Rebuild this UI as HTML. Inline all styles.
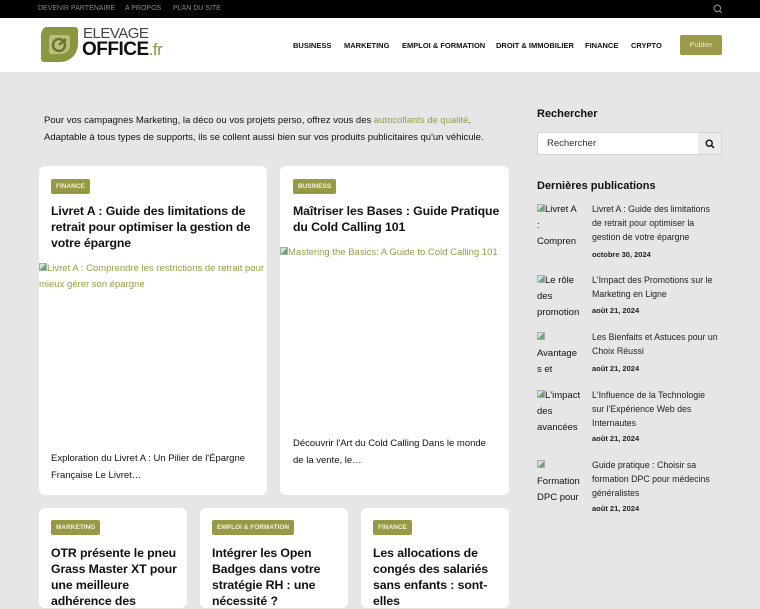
<!DOCTYPE html>
<html><head><meta charset="utf-8"><style>
*{margin:0;padding:0;box-sizing:border-box}
body{width:760px;height:600px;overflow:hidden;background:#e6e6e6;font-family:"Liberation Sans",Arial,sans-serif;color:#111;position:relative}
.top{position:absolute;left:0;top:0;width:760px;height:18px;background:#000}
.top span{position:absolute;top:5px;font-size:7px;color:#888}
.hdr{position:absolute;left:0;top:18px;width:760px;height:54px;background:#fff}
.nav{position:absolute;top:41px;font-size:7.5px;font-weight:bold;color:#111}
.btn{position:absolute;left:680px;top:35px;width:42px;height:20px;background:#9a9a48;border-radius:2px;color:#e8e8c8;font-size:7.5px;text-align:center;line-height:20px}
.intro{position:absolute;left:44px;top:112px;width:470px;font-size:9.5px;line-height:17px;color:#111}
.intro a{color:#9a9a48;text-decoration:none}
.card{position:absolute;background:#fff;border-radius:6px}
.tag{position:absolute;background:#979a45;color:#f0f0e0;font-size:6.5px;font-weight:bold;height:15px;line-height:15px;padding:0 5px;border-radius:2px}
.ttl{position:absolute;font-size:12.3px;font-weight:bold;line-height:16px;color:#111;letter-spacing:-0.1px}
.alt{position:absolute;font-size:9.5px;line-height:16px;color:#9a9a48}
.exc{position:absolute;font-size:9.5px;line-height:17px;color:#111}
.side h3{position:absolute;font-size:11px;font-weight:bold}
.sb{position:absolute;left:537px;top:132px;width:185px;height:23px;background:#fff;border:1px solid #d4d4d4}
.sb span{position:absolute;left:9px;top:5px;font-size:9.5px;color:#333}
.sb i{position:absolute;right:0;top:0;width:23px;height:21px;background:#ececec}
.it{position:absolute;left:537px;font-size:9.5px;line-height:16px;color:#111;width:44px;overflow-wrap:anywhere;height:48px;overflow:hidden}
.pt{position:absolute;left:592px;width:128px;font-size:8.8px;line-height:14px;color:#222}
.dt{position:absolute;left:592px;font-size:7.5px;font-weight:bold;color:#222}
.bi{display:inline-block;width:8px;height:8px;border:1px solid #aaa;background:linear-gradient(135deg,#cde 50%,#6a6 50%);vertical-align:0}
</style></head><body>
<div class="top">
<span style="left:38px">DEVENIR PARTENAIRE</span>
<span style="left:125px">A PROPOS</span>
<span style="left:173px">PLAN DU SITE</span>
<svg style="position:absolute;left:713px;top:4px" width="10" height="10" viewBox="0 0 10 10"><circle cx="4.3" cy="4.3" r="3.3" fill="none" stroke="#999" stroke-width="1"/><path d="M6.7 6.7L9 9" stroke="#999" stroke-width="1"/></svg>
</div>
<div class="hdr">
<svg style="position:absolute;left:39px;top:7px" width="40" height="38" viewBox="0 0 40 38"><path d="M8 2h28a3 3 0 0 1 3 3v14c0 10-8 18-18 18H5a3 3 0 0 1-3-3V12C2 6 4 2 8 2z" fill="#8c9640"/><path d="M12 10h17c1 0 2 1 2 2v8c0 5-4 9-9 9H12c-1 0-2-1-2-2V15c0-3 1-5 2-5z" fill="#b9c07a"/><circle cx="20" cy="20" r="6" fill="none" stroke="#6b7330" stroke-width="2.5"/><path d="M20 20l7-6" stroke="#6b7330" stroke-width="2.5"/></svg>
<div style="position:absolute;left:83px;top:7px;font-size:15px;color:#444;letter-spacing:-0.5px">ELEVAGE</div>
<div style="position:absolute;left:82px;top:21px;font-size:19px;font-weight:bold;color:#111;letter-spacing:-0.5px">OFFICE<span style="font-weight:normal;color:#8c9640;font-size:17px">.fr</span></div>
</div>
<div class="nav" style="left:293px">BUSINESS</div>
<div class="nav" style="left:344px">MARKETING</div>
<div class="nav" style="left:402px">EMPLOI &amp; FORMATION</div>
<div class="nav" style="left:496px">DROIT &amp; IMMOBILIER</div>
<div class="nav" style="left:585px">FINANCE</div>
<div class="nav" style="left:631px">CRYPTO</div>
<div class="btn">Publier</div>

<div class="intro">Pour vos campagnes Marketing, la déco ou vos projets perso, offrez vous des <a>autocollants de qualité</a>.<br>Adaptable à tous types de supports, ils se collent aussi bien sur vos produits publicitaires qu'un véhicule.</div>

<div class="card" style="left:39px;top:166px;width:228px;height:329px"></div>
<div class="tag" style="left:51px;top:179px">FINANCE</div>
<div class="ttl" style="left:51px;top:203px;width:205px">Livret A : Guide des limitations de retrait pour optimiser la gestion de votre épargne</div>
<div class="alt" style="left:39px;top:261px;width:232px"><span class="bi"></span>Livret A : Comprendre les restrictions de retrait pour mieux gérer son épargne</div>
<div class="exc" style="left:51px;top:450px;width:210px">Exploration du Livret A : Un Pilier de l'Épargne Française Le Livret…</div>

<div class="card" style="left:280px;top:166px;width:229px;height:329px"></div>
<div class="tag" style="left:293px;top:179px">BUSINESS</div>
<div class="ttl" style="left:293px;top:203px;width:210px">Maîtriser les Bases : Guide Pratique du Cold Calling 101</div>
<div class="alt" style="left:280px;top:245px;width:232px"><span class="bi"></span>Mastering the Basics: A Guide to Cold Calling 101</div>
<div class="exc" style="left:293px;top:435px;width:205px">Découvrir l'Art du Cold Calling Dans le monde de la vente, le…</div>

<div class="card" style="left:39px;top:508px;width:148px;height:100px"></div>
<div class="tag" style="left:51px;top:520px">MARKETING</div>
<div class="ttl" style="left:51px;top:545px;width:132px">OTR présente le pneu Grass Master XT pour une meilleure adhérence des</div>
<div class="card" style="left:200px;top:508px;width:148px;height:100px"></div>
<div class="tag" style="left:212px;top:520px">EMPLOI &amp; FORMATION</div>
<div class="ttl" style="left:212px;top:545px;width:132px">Intégrer les Open Badges dans votre stratégie RH : une nécessité ?</div>
<div class="card" style="left:361px;top:508px;width:148px;height:100px"></div>
<div class="tag" style="left:373px;top:520px">FINANCE</div>
<div class="ttl" style="left:373px;top:545px;width:132px">Les allocations de congés des salariés sans enfants : sont-elles</div>

<div class="side">
<h3 style="left:537px;top:108px">Rechercher</h3>
<div class="sb"><span>Rechercher</span><i><svg style="position:absolute;left:7px;top:6px" width="10" height="10" viewBox="0 0 10 10"><circle cx="4.2" cy="4.2" r="3" fill="none" stroke="#111" stroke-width="1.4"/><path d="M6.4 6.4L9 9" stroke="#111" stroke-width="1.5"/></svg></i></div>
<h3 style="left:537px;top:180px">Dernières publications</h3>
</div>
<div class="it" style="top:202px"><span class="bi"></span>Livret A : Compren</div>
<div class="pt" style="top:202px">Livret A : Guide des limitations de retrait pour optimiser la gestion de votre épargne</div>
<div class="dt" style="top:250px">octobre 30, 2024</div>
<div class="it" style="top:273px"><span class="bi"></span>Le rôle des promotion</div>
<div class="pt" style="top:273px">L'Impact des Promotions sur le Marketing en Ligne</div>
<div class="dt" style="top:306px">août 21, 2024</div>
<div class="it" style="top:330px"><span class="bi"></span>Avantages et comment</div>
<div class="pt" style="top:330px">Les Bienfaits et Astuces pour un Choix Réussi</div>
<div class="dt" style="top:364px">août 21, 2024</div>
<div class="it" style="top:388px"><span class="bi"></span>L'impact des avancées</div>
<div class="pt" style="top:388px;width:125px">L'Influence de la Technologie sur l'Expérience Web des Internautes</div>
<div class="dt" style="top:434px">août 21, 2024</div>
<div class="it" style="top:458px"><span class="bi"></span>Formation DPC pour</div>
<div class="pt" style="top:458px">Guide pratique : Choisir sa formation DPC pour médecins généralistes</div>
<div class="dt" style="top:504px">août 21, 2024</div>
</body></html>
